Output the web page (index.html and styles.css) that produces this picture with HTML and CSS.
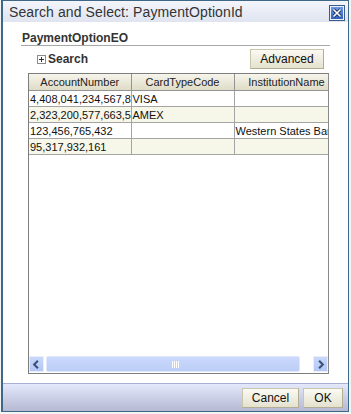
FILE: index.html
```html
<!DOCTYPE html>
<html lang="en">
<head>
    <meta charset="UTF-8">
    <title>Search and Select: PaymentOptionId</title>
    <link rel="stylesheet" href="styles.css">
</head>
<body>
    <div class="dialog">
        <div class="titlebar">
            <span class="title">Search and Select: PaymentOptionId</span>
            <span class="close">
                <svg width="16" height="16" viewBox="0 0 16 16">
                    <defs>
                        <linearGradient id="cb" x1="0" y1="0" x2="0" y2="1">
                            <stop offset="0" stop-color="#6f9be6"/>
                            <stop offset="1" stop-color="#2f5fc0"/>
                        </linearGradient>
                    </defs>
                    <rect x="0.5" y="0.5" width="15" height="15" fill="#e8eef8" stroke="#3b5d86"/>
                    <rect x="2" y="2" width="12" height="12" fill="url(#cb)"/>
                    <path d="M4.5 4.5 L11.5 11.5 M11.5 4.5 L4.5 11.5" stroke="#1c3564" stroke-width="3.2"/>
                    <path d="M4.5 4.5 L11.5 11.5 M11.5 4.5 L4.5 11.5" stroke="#ffffff" stroke-width="1.6"/>
                </svg>
            </span>
        </div>

        <div class="content">
            <div class="heading">PaymentOptionEO</div>
            <div class="search-row">
                <span class="toggle">
                    <span class="plus">
                        <svg width="9" height="9" viewBox="0 0 9 9">
                            <rect x="0.5" y="0.5" width="8" height="8" fill="#fff" stroke="#8c8c8c"/>
                            <path d="M2 4.5 H7 M4.5 2 V7" stroke="#333" stroke-width="1"/>
                        </svg>
                    </span>
                    Search
                </span>
                <button class="btn btn-advanced">Advanced</button>
            </div>

            <div class="table-box">
                <div class="table-view">
                    <table class="grid">
                        <colgroup>
                            <col class="c1"><col class="c2"><col class="c3">
                        </colgroup>
                        <thead>
                            <tr><th>AccountNumber</th><th>CardTypeCode</th><th>InstitutionName</th></tr>
                        </thead>
                        <tbody>
                            <tr><td>4,408,041,234,567,890</td><td>VISA</td><td></td></tr>
                            <tr class="alt"><td>2,323,200,577,663,554</td><td>AMEX</td><td></td></tr>
                            <tr><td>123,456,765,432</td><td></td><td>Western States Bank</td></tr>
                            <tr class="alt"><td>95,317,932,161</td><td></td><td></td></tr>
                        </tbody>
                    </table>
                </div>
                <div class="hscroll">
                    <span class="arrow">
                        <svg width="14" height="13" viewBox="0 0 14 13"><path d="M8.5 2.5 L4.5 6.5 L8.5 10.5" fill="none" stroke="#3b5078" stroke-width="2.2"/></svg>
                    </span>
                    <span class="thumb">
                        <span class="grip"></span>
                    </span>
                    <span class="gap"></span>
                    <span class="arrow">
                        <svg width="14" height="13" viewBox="0 0 14 13"><path d="M5.5 2.5 L9.5 6.5 L5.5 10.5" fill="none" stroke="#3b5078" stroke-width="2.2"/></svg>
                    </span>
                </div>
            </div>
        </div>

        <div class="footer">
            <button class="btn btn-cancel">Cancel</button>
            <button class="btn btn-ok">OK</button>
        </div>
    </div>
</body>
</html>
```

FILE: styles.css
```css
body {
    margin: 0;
    background-color: #f4f4f4;
    font-family: "Liberation Sans", Arial, sans-serif;
    color: #222;
}
.dialog {
    box-sizing: border-box;
    width: 348px;
    height: 412px;
    margin-left: 1px;
    border: 1px solid #3f6888;
    border-left-width: 2px;
    background-color: #fff;
    display: flex;
    flex-direction: column;
}
.titlebar {
    height: 21px;
    display: flex;
    align-items: center;
    justify-content: space-between;
    padding: 0 3px 0 6px;
    background: linear-gradient(#f3f5fb, #dfe4f0);
    flex-shrink: 0;
}
.title {
    font-size: 14px;
    color: #333;
    letter-spacing: 0.1px;
}
.close {
    display: flex;
    margin-top: 2px;
}
.content {
    flex: 1;
    padding: 10px 18px 0 18px;
    display: flex;
    flex-direction: column;
    min-height: 0;
}
.heading {
    font-size: 12px;
    font-weight: bold;
    color: #333;
    padding: 0 0 1px 1px;
    line-height: 12px;
    border-bottom: 1px solid #a8a8a8;
}
.search-row {
    display: flex;
    justify-content: space-between;
    align-items: flex-start;
    height: 24px;
    margin-top: 3px;
    padding: 0 6px 0 16px;
}
.toggle {
    display: flex;
    align-items: center;
    gap: 2px;
    padding-top: 3px;
    font-size: 12px;
    font-weight: bold;
    color: #333;
}
.plus {
    display: flex;
}
.btn {
    font-family: "Liberation Sans", Arial, sans-serif;
    font-size: 12px;
    color: #111;
    height: 20px;
    padding: 0;
    border: 1px solid #c9c6ad;
    border-right-color: #b2ae93;
    border-bottom-color: #b2ae93;
    background: linear-gradient(#fbfaf3, #e4e1ce);
    border-radius: 0;
}
.btn-advanced {
    width: 74px;
}
.table-box {
    margin: 0 1px 0 7px;
    height: 301px;
    box-sizing: border-box;
    border: 1px solid #7d7d7d;
    border-right-color: #8a8a8a;
    display: flex;
    flex-direction: column;
}
.table-view {
    flex: 1;
    overflow: hidden;
    background-color: #fff;
}
.grid {
    border-collapse: collapse;
    table-layout: fixed;
    width: 310px;
    font-size: 11px;
}
.c1 { width: 102px; }
.c2 { width: 103px; }
.c3 { width: 105px; }
.grid th {
    height: 16px;
    font-weight: normal;
    color: #222;
    text-align: center;
    background: linear-gradient(#f6f5ec, #dedbc6);
    border-right: 1px solid #949494;
    border-bottom: 1px solid #949494;
    padding: 0;
}
.grid td {
    height: 15px;
    padding: 0 0 0 1px;
    white-space: nowrap;
    overflow: hidden;
    border-right: 1px solid #a4a4a4;
    border-bottom: 1px solid #a4a4a4;
    color: #111;
}
.grid tr.alt td {
    background-color: #f6f6e9;
}
.hscroll {
    height: 16px;
    display: flex;
    align-items: stretch;
    background-color: #fff;
    padding-bottom: 1px;
}
.arrow {
    width: 15px;
    box-sizing: border-box;
    border: 1px solid #e9eefa;
    background: linear-gradient(#c9d8fb, #b3c7f5);
    display: flex;
    align-items: center;
    justify-content: center;
}
.thumb {
    flex: 1;
    margin-left: 2px;
    border: 1px solid #dfe7fb;
    border-radius: 2px;
    background: linear-gradient(#cad9fc, #bccef7);
    display: flex;
    align-items: center;
    justify-content: center;
}
.grip {
    width: 8px;
    height: 7px;
    background: repeating-linear-gradient(90deg, #ffffff 0 1px, transparent 1px 2px);
    margin-left: 6px;
}
.gap {
    width: 13px;
}
.footer {
    flex-shrink: 0;
    height: 28px;
    box-sizing: border-box;
    border-top: 1px solid #a7afd6;
    background: linear-gradient(#e3e8fb, #b6b9d2);
    display: flex;
    justify-content: flex-end;
    align-items: center;
    gap: 4px;
    padding: 0 5px 0 0;
}
.btn-cancel {
    width: 57px;
}
.btn-ok {
    width: 40px;
}
```
